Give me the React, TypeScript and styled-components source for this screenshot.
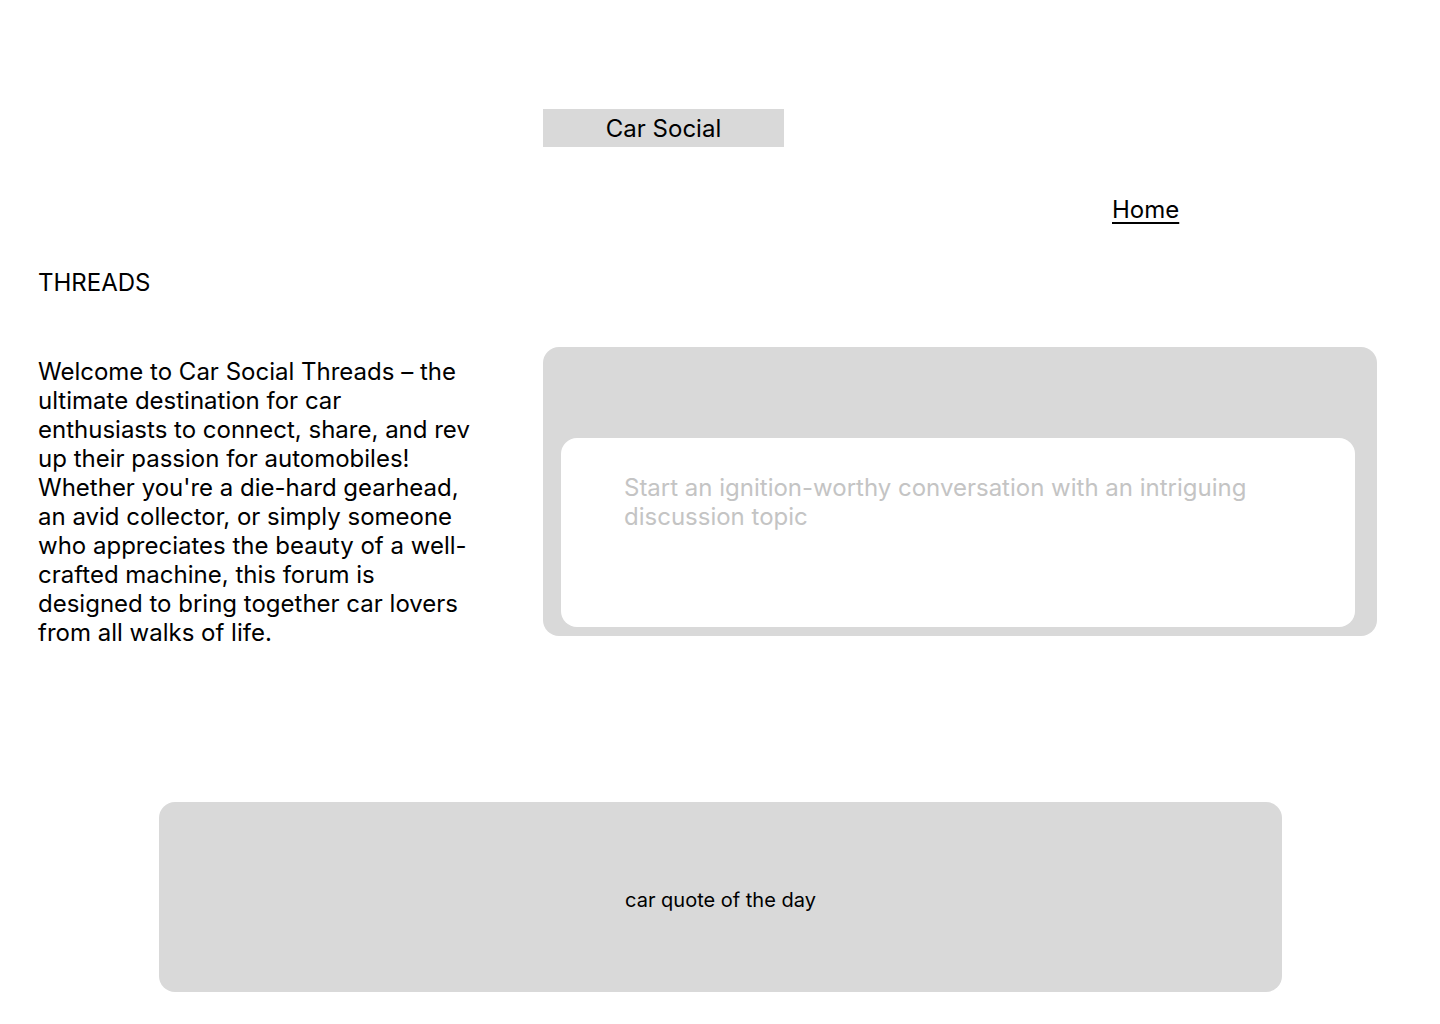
import React from "react";
import styled, { createGlobalStyle } from "styled-components";

const Global = createGlobalStyle`
  html, body { margin: 0; padding: 0; background: #ffffff; }
  body { font-family: Inter, "Noto Sans", sans-serif; color: #000; }
  * { box-sizing: border-box; }
`;

const Page = styled.div`
  width: 1440px;
  min-height: 1024px;
  display: flex;
  flex-direction: column;
  padding-top: 109px;
`;

const Header = styled.header`
  display: flex;
  padding-left: 543px;
`;

const Brand = styled.div`
  width: 241px;
  height: 38px;
  background: #d9d9d9;
  display: flex;
  align-items: center;
  justify-content: center;
  font-size: 24px;
  line-height: 29px;
`;

const Nav = styled.nav`
  display: flex;
  padding-left: 1112px;
  margin-top: 48px;
`;

const NavLink = styled.a`
  font-size: 24px;
  line-height: 29px;
  color: #000;
  text-decoration: underline;
  text-underline-offset: 4px;
  text-decoration-thickness: 2px;
`;

const SectionTitle = styled.h2`
  margin: 44px 0 0 38px;
  font-size: 24px;
  line-height: 29px;
  font-weight: 400;
`;

const Main = styled.main`
  display: flex;
  align-items: flex-start;
  padding-left: 38px;
  margin-top: 50px;
`;

const Intro = styled.p`
  width: 505px;
  padding-right: 70px;
  margin: 0;
  padding-top: 10px;
  font-size: 24px;
  line-height: 29px;
`;

const Composer = styled.section`
  width: 834px;
  height: 289px;
  background: #d9d9d9;
  border-radius: 16px;
  display: flex;
  padding: 91px 22px 9px 18px;
`;

const ComposerInput = styled.div`
  flex: 1;
  background: #ffffff;
  border-radius: 16px;
  padding: 35px 100px 0 63px;
  font-size: 24px;
  line-height: 29px;
  color: #c4c4c4;
`;

const Quote = styled.section`
  margin: 155px 0 0 159px;
  width: 1123px;
  height: 190px;
  background: #d9d9d9;
  border-radius: 16px;
  display: flex;
  align-items: center;
  justify-content: center;
  padding-top: 6px;
  font-size: 20px;
  line-height: 24px;
`;

export default function App() {
  return (
    <>
      <Global />
      <Page>
        <Header>
          <Brand>Car Social</Brand>
        </Header>
        <Nav>
          <NavLink href="#">Home</NavLink>
        </Nav>
        <SectionTitle>THREADS</SectionTitle>
        <Main>
          <Intro>
            Welcome to Car Social Threads – the ultimate destination for car
            enthusiasts to connect, share, and rev up their passion for
            automobiles! Whether you're a die-hard gearhead, an avid collector,
            or simply someone who appreciates the beauty of a well-crafted
            machine, this forum is designed to bring together car lovers from
            all walks of life.
          </Intro>
          <Composer>
            <ComposerInput>
              Start an ignition-worthy conversation with an intriguing
              discussion topic
            </ComposerInput>
          </Composer>
        </Main>
        <Quote>car quote of the day</Quote>
      </Page>
    </>
  );
}
